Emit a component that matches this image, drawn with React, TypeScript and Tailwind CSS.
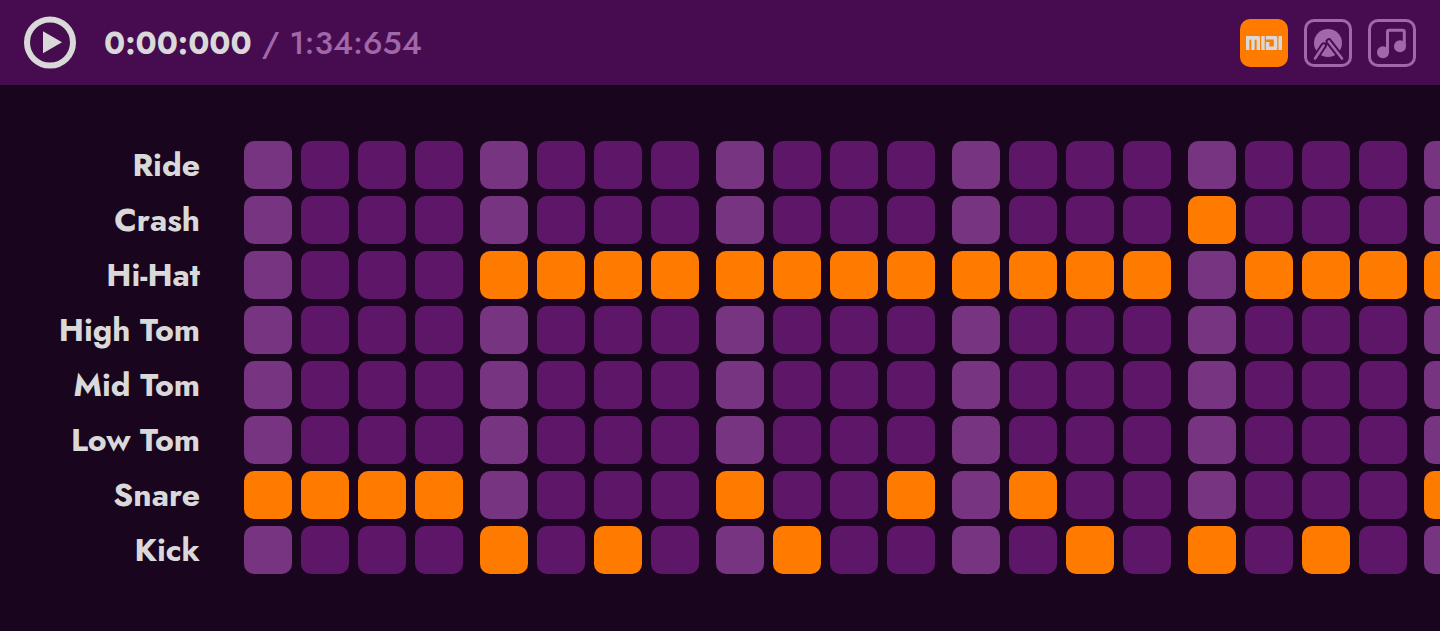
import { useState } from "react";

type Track = { name: string; steps: string };

const initialTracks: Track[] = [
  { name: "Ride", steps: "........................" },
  { name: "Crash", steps: "................x......." },
  { name: "Hi-Hat", steps: "....xxxxxxxxxxxx.xxxxxxx" },
  { name: "High Tom", steps: "........................" },
  { name: "Mid Tom", steps: "........................" },
  { name: "Low Tom", steps: "........................" },
  { name: "Snare", steps: "xxxx....x..x.x......x..." },
  { name: "Kick", steps: "....x.x..x....x.x.x....." },
];

const STEPS_PER_BEAT = 4;

function chunk(steps: boolean[]): boolean[][] {
  const beats: boolean[][] = [];
  for (let i = 0; i < steps.length; i += STEPS_PER_BEAT) {
    beats.push(steps.slice(i, i + STEPS_PER_BEAT));
  }
  return beats;
}

function stepColor(active: boolean, first: boolean): string {
  if (active) return "bg-[#ff7b00]";
  return first ? "bg-[#773480]" : "bg-[#5d1668]";
}

function PlayIcon() {
  return (
    <svg viewBox="0 0 52 53" className="size-full" aria-hidden="true">
      <circle cx="26" cy="26.5" r="23" fill="none" stroke="#d9d9d9" strokeWidth="6" />
      <path d="M19 15.3v22l19-11z" fill="#d9d9d9" />
    </svg>
  );
}

function MidiIcon() {
  return (
    <svg viewBox="0 0 48 48" className="size-full" aria-hidden="true">
      <rect width="48" height="48" rx="10" fill="#ff7b00" />
      <g fill="#d9d9d9">
        <path d="M6 17H18.5Q20 17 20 18.5V31H16.6V20.8H14.7V31H11.3V20.8H9.4V31H6Z" />
        <path d="M21.2 17H24.7V31H21.2Z" />
        <path d="M25.9 17H35.8Q37.3 17 37.3 18.5V29.5Q37.3 31 35.8 31H25.9V23H29.4V27.6H33.8V20.6H25.9Z" />
        <path d="M38.5 17H42V31H38.5Z" />
      </g>
    </svg>
  );
}

function DrumIcon() {
  return (
    <svg viewBox="0 0 48 48" className="size-full" aria-hidden="true">
      <rect x="1.5" y="1.5" width="45" height="45" rx="8.5" fill="none" stroke="#a067a9" strokeWidth="3" />
      <circle cx="24" cy="24" r="14" fill="#a067a9" />
      <g fill="none" strokeLinecap="round">
        <path d="M19.7 26.5L11 39.5M24.8 22.5L38 39.5" stroke="#470c4f" strokeWidth="6.4" />
        <path d="M19.7 26.5L11 39.5M24.8 22.5L38 39.5" stroke="#a067a9" strokeWidth="2.6" />
      </g>
    </svg>
  );
}

function NoteIcon() {
  return (
    <svg viewBox="0 0 48 48" className="size-full" aria-hidden="true">
      <rect x="1.5" y="1.5" width="45" height="45" rx="8.5" fill="none" stroke="#a067a9" strokeWidth="3" />
      <path d="M19.5 34V12.8Q19.5 11.3 21 11.3H34.8Q36.3 11.3 36.3 12.8V28" fill="none" stroke="#a067a9" strokeWidth="3" />
      <circle cx="15" cy="33.3" r="6" fill="#a067a9" />
      <circle cx="32" cy="27.2" r="6" fill="#a067a9" />
    </svg>
  );
}

export default function App() {
  const [grid, setGrid] = useState(() =>
    initialTracks.map((track) => Array.from(track.steps, (s) => s === "x")),
  );

  const toggle = (row: number, step: number) =>
    setGrid((prev) =>
      prev.map((steps, r) => (r === row ? steps.map((on, s) => (s === step ? !on : on)) : steps)),
    );

  return (
    <div className="flex min-h-screen flex-col bg-[#19051d] text-[#d9d9d9]">
      <header className="flex items-center justify-between bg-[#470c4f] px-6 py-4">
        <div className="flex items-center gap-7">
          <button type="button" aria-label="Play" className="h-[53px] w-[52px] cursor-pointer">
            <PlayIcon />
          </button>
          <p className="flex gap-2.5 font-['Jost','Inter',sans-serif] text-[32px] font-medium leading-10 text-[#a067a9]">
            <span className="font-bold text-[#d9d9d9]">0:00:000</span>
            <span>/</span>
            <span>1:34:654</span>
          </p>
        </div>
        <nav className="flex gap-4">
          <button type="button" aria-label="MIDI" aria-pressed="true" className="size-12 cursor-pointer">
            <MidiIcon />
          </button>
          <button type="button" aria-label="Drums" aria-pressed="false" className="size-12 cursor-pointer">
            <DrumIcon />
          </button>
          <button type="button" aria-label="Notes" aria-pressed="false" className="size-12 cursor-pointer">
            <NoteIcon />
          </button>
        </nav>
      </header>

      <main className="flex gap-11 py-14">
        <ul className="flex w-[200px] shrink-0 flex-col gap-[7px] text-right font-['Jost','Lato',sans-serif] text-[32px] font-bold leading-[48px]">
          {initialTracks.map((track) => (
            <li key={track.name}>{track.name}</li>
          ))}
        </ul>
        <div className="flex min-w-0 flex-1 flex-col gap-[7px] overflow-x-auto [scrollbar-width:none]">
          {grid.map((steps, row) => (
            <div key={initialTracks[row].name} className="flex gap-[17px]">
              {chunk(steps).map((beat, b) => (
                <div key={b} className="flex shrink-0 gap-[9px]">
                  {beat.map((active, s) => (
                    <button
                      key={s}
                      type="button"
                      aria-label={`${initialTracks[row].name} step ${b * STEPS_PER_BEAT + s + 1}`}
                      aria-pressed={active}
                      onClick={() => toggle(row, b * STEPS_PER_BEAT + s)}
                      className={`size-12 shrink-0 cursor-pointer rounded-[10px] ${stepColor(active, s === 0)}`}
                    />
                  ))}
                </div>
              ))}
            </div>
          ))}
        </div>
      </main>
    </div>
  );
}
